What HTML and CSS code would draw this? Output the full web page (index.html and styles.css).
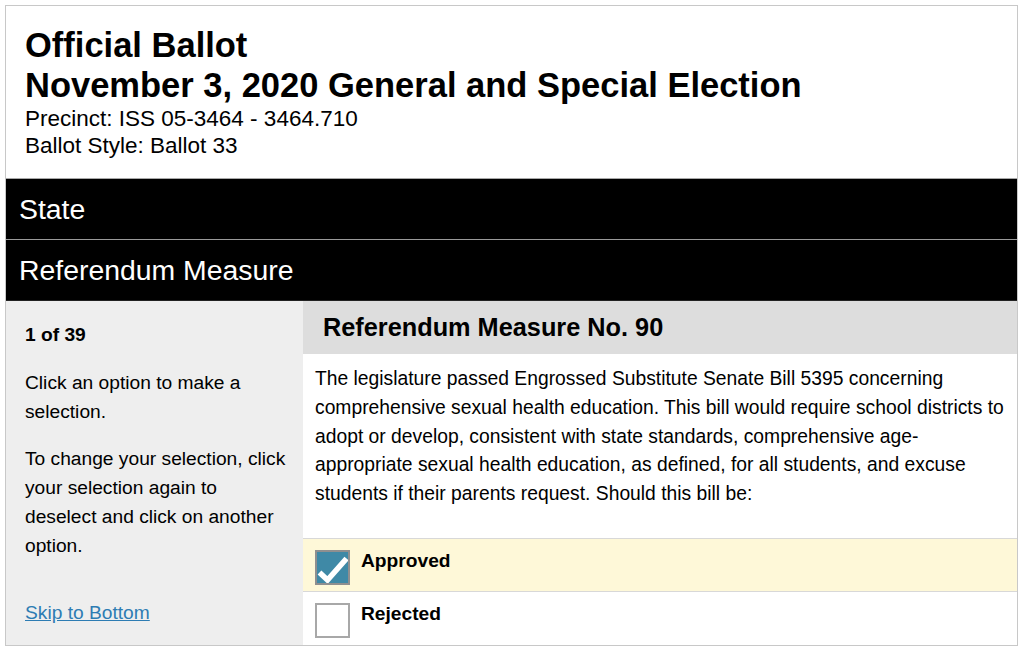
FILE: index.html
```html
<!DOCTYPE html>
<html lang="en">
<head>
<meta charset="utf-8">
<title>Official Ballot</title>
<link rel="stylesheet" href="styles.css">
</head>
<body>
<div class="ballot">
  <header class="ballot-header">
    <h1 class="title">Official Ballot<br>November 3, 2020 General and Special Election</h1>
    <div class="meta-group">
      <div class="meta">Precinct: ISS 05-3464 - 3464.710</div>
      <div class="meta">Ballot Style: Ballot 33</div>
    </div>
  </header>
  <div class="bar bar-state">State</div>
  <div class="bar bar-type">Referendum Measure</div>
  <div class="content">
    <aside class="sidebar">
      <p class="count">1 of 39</p>
      <p>Click an option to make a selection.</p>
      <p>To change your selection, click your selection again to deselect and click on another option.</p>
      <a class="skip" href="#bottom">Skip to Bottom</a>
    </aside>
    <main class="contest">
      <h2 class="contest-title">Referendum Measure No. 90</h2>
      <p class="description">The legislature passed Engrossed Substitute Senate Bill 5395 concerning comprehensive sexual health education. This bill would require school districts to adopt or develop, consistent with state standards, comprehensive age-appropriate sexual health education, as defined, for all students, and excuse students if their parents request. Should this bill be:</p>
      <div class="option selected">
        <span class="box checked">
          <svg viewBox="0 0 31 31" width="31" height="31"><path d="M2.5 20.5 L10.5 28 L29.5 6.5" fill="none" stroke="#fff" stroke-width="5.5"/></svg>
        </span>
        <span class="label">Approved</span>
      </div>
      <div class="option">
        <span class="box"></span>
        <span class="label">Rejected</span>
      </div>
    </main>
  </div>
</div>
</body>
</html>
```

FILE: styles.css
```css
* { box-sizing: border-box; }
html, body { margin: 0; padding: 0; background: #fff; }
body {
  padding: 5px 0 0 5px;
  font-family: "Liberation Sans", Arial, Helvetica, sans-serif;
  color: #000;
}
.ballot {
  width: 1013px;
  height: 641px;
  border: 1px solid #c8c8c8;
  display: flex;
  flex-direction: column;
  overflow: hidden;
}
.ballot-header {
  padding: 19px 19px 19px 19px;
  border-bottom: 1px solid #a8a8a8;
  flex: none;
}
.title {
  margin: 0;
  font-size: 34.5px;
  line-height: 40px;
  font-weight: bold;
}
.meta-group { padding-top: 1px; }
.meta {
  font-size: 22.5px;
  line-height: 26.5px;
}
.bar {
  flex: none;
  height: 61px;
  background: #000;
  color: #fff;
  font-size: 28.4px;
  line-height: 1;
  padding-left: 13px;
  display: flex;
  align-items: center;
}
.bar-state { border-bottom: 1px solid #9a9a9a; }
.bar-type { border-bottom: 1px solid #222; }
.content {
  flex: 1;
  display: grid;
  grid-template-columns: 297px 1fr;
  min-height: 0;
}
.sidebar {
  background: #eee;
  padding: 20px 12px 20px 19px;
  font-size: 19.2px;
  line-height: 28.75px;
}
.sidebar p { margin: 0 0 19px; }
.sidebar .count { font-weight: bold; }
.skip {
  display: inline-block;
  margin-top: 20px;
  color: #2d7cb3;
  text-decoration: underline;
}
.contest { background: #fff; }
.contest-title {
  margin: 0;
  height: 53px;
  background: #ddd;
  font-size: 25.3px;
  font-weight: bold;
  line-height: 1;
  padding-left: 20px;
  display: flex;
  align-items: center;
}
.description {
  margin: 0;
  padding: 11px 6px 29px 12px;
  font-size: 19.3px;
  line-height: 28.75px;
}
.option {
  display: flex;
  align-items: flex-start;
  gap: 11px;
  padding: 11px 12px 5px;
  border-top: 1px solid #d8d8d8;
  height: 53px;
  flex: none;
}
.option.selected { background: #fef8d8; }
.box {
  width: 35px;
  height: 35px;
  border: 2px solid #a8a8a8;
  background: #fff;
  flex: none;
  display: block;
}
.box.checked {
  background: #3f89a6;
  border-color: #8f8f8f;
}
.box svg { display: block; }
.label {
  font-size: 19.2px;
  font-weight: bold;
  line-height: 22px;
}
```
